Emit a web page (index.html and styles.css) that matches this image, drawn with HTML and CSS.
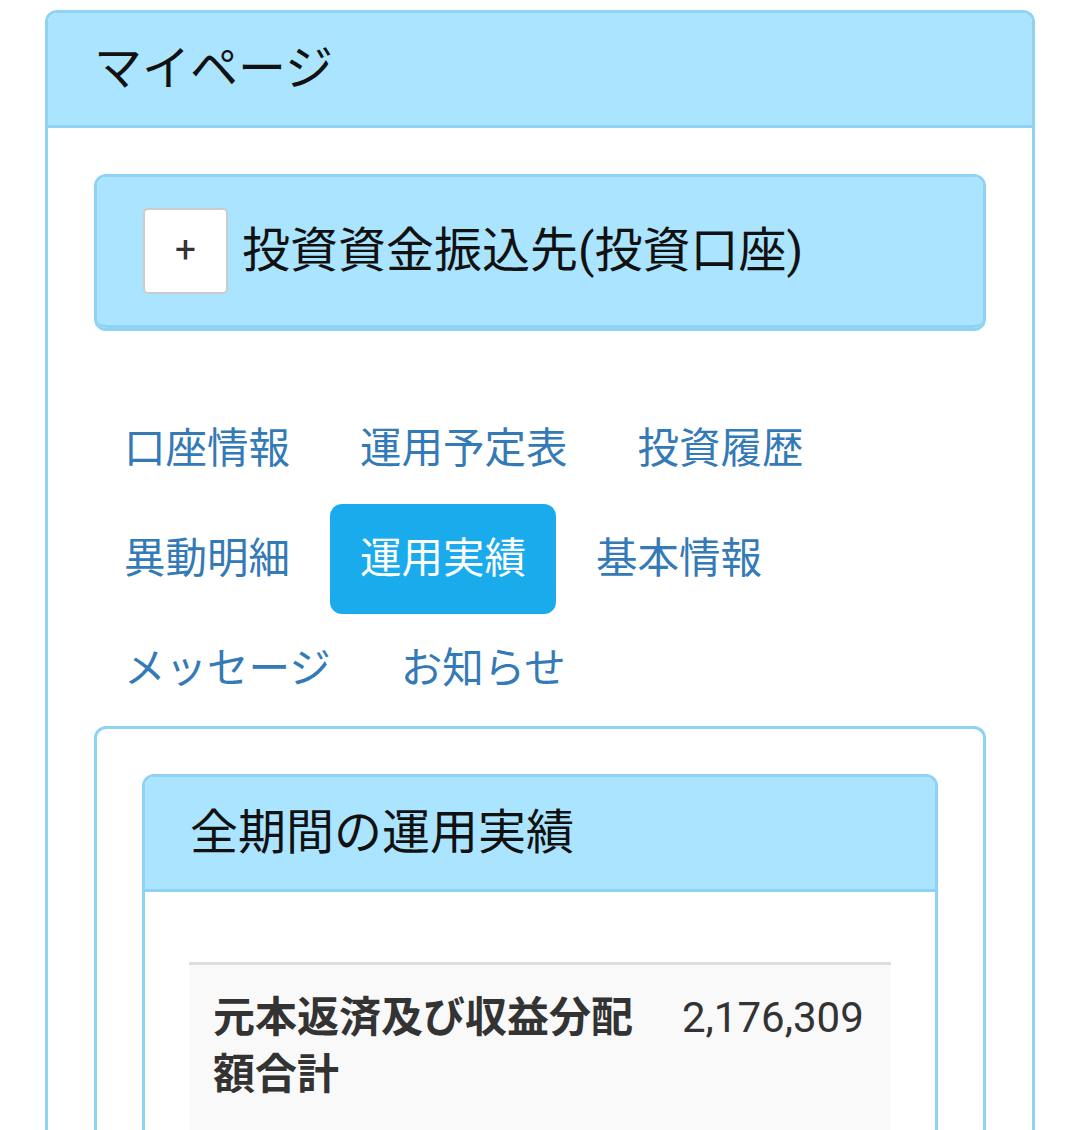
FILE: index.html
```html
<!DOCTYPE html>
<html lang="ja">
<head>
<meta charset="utf-8">
<title>マイページ</title>
<link rel="stylesheet" href="styles.css">
</head>
<body>
<div class="page">
  <div class="panel outer">
    <div class="panel-heading outer-heading">
      <h3 class="panel-title">マイページ</h3>
    </div>
    <div class="outer-body">
      <div class="panel account">
        <div class="panel-heading account-heading">
          <button class="toggle" type="button">+</button>
          <h4 class="account-title">投資資金振込先(投資口座)</h4>
        </div>
      </div>

      <ul class="nav">
        <li class="nav-item"><a href="#">口座情報</a></li>
        <li class="nav-item"><a href="#">運用予定表</a></li>
        <li class="nav-item"><a href="#">投資履歴</a></li>
        <li class="nav-item"><a href="#">異動明細</a></li>
        <li class="nav-item active"><a href="#">運用実績</a></li>
        <li class="nav-item"><a href="#">基本情報</a></li>
        <li class="nav-item"><a href="#">メッセージ</a></li>
        <li class="nav-item"><a href="#">お知らせ</a></li>
      </ul>

      <div class="panel tab-content">
        <div class="panel results">
          <div class="panel-heading results-heading">
            <h3 class="panel-title">全期間の運用実績</h3>
          </div>
          <div class="results-body">
            <div class="table">
              <div class="row striped">
                <div class="cell label">元本返済及び収益分配額合計</div>
                <div class="cell value">2,176,309</div>
              </div>
            </div>
          </div>
        </div>
      </div>
    </div>
  </div>
</div>
</body>
</html>
```

FILE: styles.css
```css
* { box-sizing: border-box; }

html, body {
  margin: 0;
  padding: 0;
  background: #fff;
}

body {
  font-family: Roboto, "Noto Sans CJK JP", sans-serif;
  color: #333;
}

.page {
  padding: 10px 45px 40px 45px;
}

.panel {
  border: 3px solid #8ed3f3;
  border-radius: 12px;
  background: #fff;
}

.panel-heading {
  background: #aae4fe;
  border-bottom: 3px solid #8ed3f3;
  border-radius: 9px 9px 0 0;
}

.panel-title {
  margin: 0;
  font-weight: normal;
  font-size: 48px;
  line-height: 54px;
  color: #111;
}

.outer {
  border-bottom: none;
  border-radius: 12px 12px 0 0;
}

.outer-heading {
  padding: 29px 46px 29px 46px;
}

.outer-body {
  padding: 46px 46px 0 46px;
}

/* account panel */
.account-heading {
  display: flex;
  align-items: center;
  gap: 14px;
  padding: 31px 46px;
  border-radius: 9px;
}

.toggle {
  width: 85px;
  height: 86px;
  background: #fff;
  border: 2px solid #cccccc;
  border-radius: 5px;
  font-family: Roboto, sans-serif;
  font-size: 37px;
  font-weight: normal;
  line-height: 1;
  color: #333;
  padding: 0 0 4px 0;
}

.account-title {
  margin: 0;
  font-weight: normal;
  font-size: 48px;
  line-height: 56px;
  color: #111;
}

/* nav pills */
.nav {
  list-style: none;
  margin: 63px 0 2px 0;
  padding: 0;
  display: flex;
  flex-wrap: wrap;
  column-gap: 10px;
}

.nav-item a {
  display: block;
  padding: 27px 30px;
  font-size: 41.5px;
  line-height: 56px;
  color: #337ab7;
  text-decoration: none;
  border-radius: 12px;
}

.nav-item.active a {
  background: #1aabed;
  color: #fff;
}

/* tab content */
.tab-content {
  padding: 45px 45px 0 45px;
  border-bottom: none;
  border-radius: 12px 12px 0 0;
}

.results {
  border-bottom: none;
  border-radius: 12px 12px 0 0;
}

.results-heading {
  padding: 29px 45px;
}

.results-body {
  padding: 70px 44px 0 44px;
}

.table {
  border-top: 3px solid #dddddd;
}

.row {
  display: flex;
  align-items: flex-start;
}

.row.striped {
  background: #f9f9f9;
}

.cell {
  padding: 24px 24px 40px 24px;
  font-size: 42px;
  line-height: 57px;
  color: #333;
}

.label {
  width: 469px;
  font-weight: bold;
  flex: none;
}

.value {
  flex: 1;
}
```
